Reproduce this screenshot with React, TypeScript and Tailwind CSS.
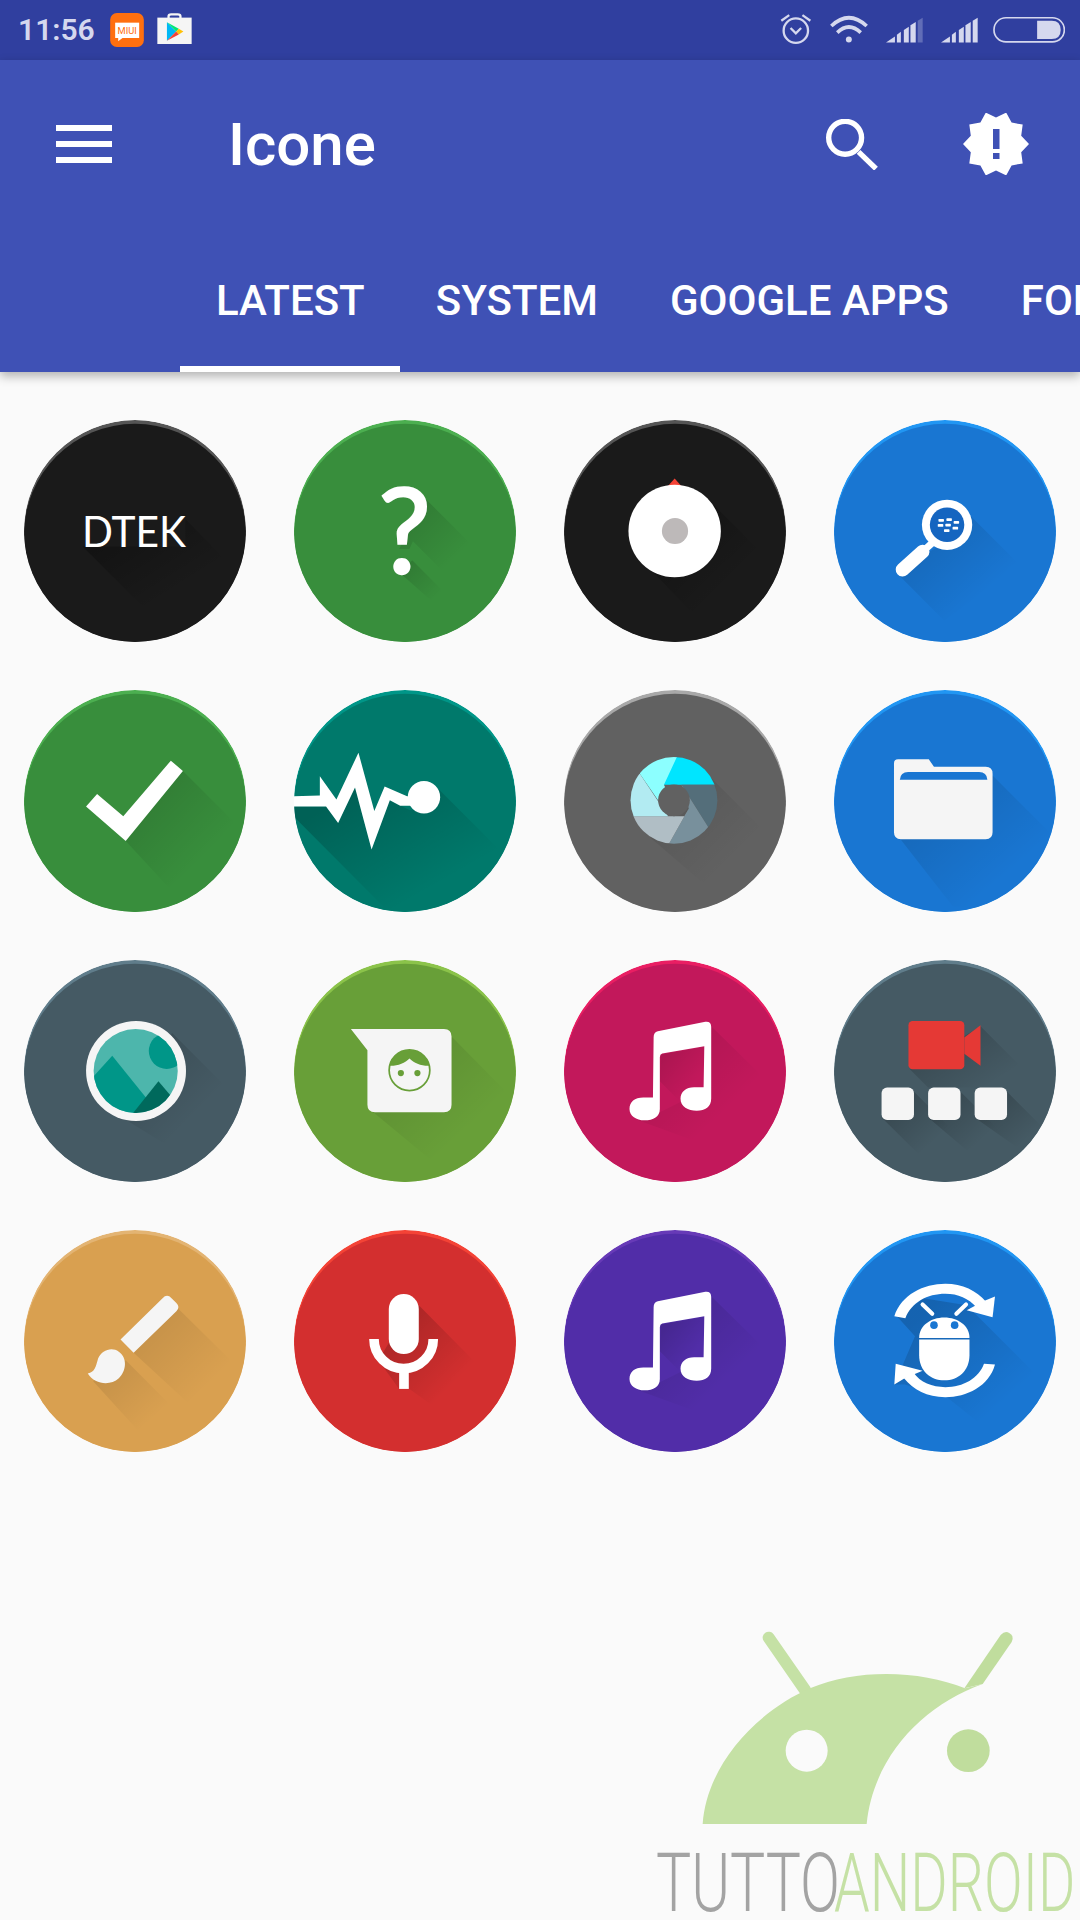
import React from 'react';

const STATUS = '#D5D8EE';

type FrameProps = {
    id: string;
    color: string;
    hi: string;
    x: number;
    y: number;
    shadows: string[];
    depth?: number;
    children: React.ReactNode;
};

// icon coordinates are kept in the zoomed crop's units, hence the viewBox offset
const Frame: React.FC<FrameProps> = ({ id, color, hi, x, y, shadows, depth = 0.13, children }) => {
    const cx = x + 322;
    const cy = y + 322;
    return (
        <svg viewBox={`${x} ${y} 644 644`} className="w-[222px] h-[222px]">
            <defs>
                <clipPath id={`${id}-clip`}>
                    <circle cx={cx} cy={cy} r={322} />
                </clipPath>
                <linearGradient id={`${id}-sh`} x1="0" y1="0" x2="1" y2="1">
                    <stop offset="0.15" stopColor="#000" stopOpacity={depth} />
                    <stop offset="0.72" stopColor="#000" stopOpacity={0} />
                </linearGradient>
            </defs>
            <g clipPath={`url(#${id}-clip)`}>
                <circle cx={cx} cy={cy} r={322} fill={hi} />
                <circle cx={cx} cy={cy + 11} r={322} fill={color} />
                {shadows.map((points, i) => (
                    <polygon key={i} points={points} fill={`url(#${id}-sh)`} />
                ))}
            </g>
            {children}
        </svg>
    );
};

const MusicNote = () => (
    <path
        d="M342 265 L480 237 Q497 235 497 252 L497 460 C497 485 480 495 455 495 C430 495 408 485 408 460 C408 440 425 426 450 427 L475 427 L477 308 L355 329 Q348 331 348 340 L348 490 C348 512 330 523 303 523 C280 523 260 510 260 490 C260 470 275 457 300 457 L328 457 L330 282 Q330 268 342 265 Z"
        fill="#fff"
    />
);

const musicShadows = [
    '350,332 477,310 477,427 425,432 408,470 348,410',
    '497,250 640,390 470,590 285,523 348,500 408,470 497,470',
];

const icons: React.ReactNode[] = [
    <Frame key="dtek" id="dtek" color="#1A1A1A" hi="#555555" x={70} y={58} depth={0.3} shadows={['240,425 538,425 538,345 660,470 560,610 420,605']}>
        <text x={238} y={425} textLength={302} lengthAdjust="spacingAndGlyphs" fontSize={125} fontFamily="Lato" fontWeight={400} fill="#fff">DTEK</text>
    </Frame>,
    <Frame key="help" id="help" color="#388E3C" hi="#4CAF50" x={855} y={58} shadows={['1240,290 1395,445 1310,520 1200,410 1190,432 1160,432', '1198,465 1315,582 1285,610 1160,500']}>
        <text x={1176} y={503} textAnchor="middle" fontSize={342} fontFamily="Lato" fontWeight={400} fill="#fff" stroke="#fff" strokeWidth={7}>?</text>
    </Frame>,
    <Frame key="disc" id="disc" color="#1A1A1A" hi="#555555" x={70} y={58} depth={0.3} shadows={['485,285 650,450 450,625 300,470']}>
        <polygon points="391,228 369,252 413,252" fill="#F44336" />
        <circle cx={391} cy={380} r={134} fill="#fff" />
        <circle cx={392} cy={380} r={38} fill="#BDB9B9" />
    </Frame>,
    <Frame key="bb" id="bb" color="#1976D2" hi="#2196F3" x={855} y={58} shadows={['1250,335 1395,480 1175,640 1045,510 1130,440 1150,430']}>
        <path d="M1145 410 L1115 437" stroke="#fff" strokeWidth={20} />
        <path d="M1112 440 L1054 492" stroke="#fff" strokeWidth={40} strokeLinecap="round" />
        <circle cx={1183} cy={362} r={73} fill="#fff" />
        <circle cx={1183} cy={362} r={50} fill="#1565C0" />
        {[[1158, 345], [1181, 343], [1202, 351], [1156, 360], [1178, 359], [1199, 368], [1174, 375]].map(([rx, ry], i) => (
            <rect key={i} x={rx} y={ry} width={16} height={8} rx={2} fill="#fff" />
        ))}
    </Frame>,
    <Frame key="check" id="check" color="#388E3C" hi="#4CAF50" x={70} y={842} shadows={['531,1077 690,1236 490,1415 365,1280']}>
        <polygon points="496,1047 531,1077 365,1280 250,1180 282,1144 358,1208" fill="#fff" />
    </Frame>,
    <Frame key="pulse" id="pulse" color="#00796B" hi="#009688" x={855} y={842} depth={0.2} shadows={['855,1180 948,1180 983,1228 1032,1125 1080,1305 1133,1162 1190,1190 1260,1190 1275,1130 1490,1345 1400,1460 1130,1486 855,1210']}>
        <polygon points="855,1150 930,1148 930,1092 978,1160 1042,1024 1088,1193 1118,1122 1183,1150 1200,1150 1200,1178 1163,1178 1133,1162 1080,1305 1032,1125 983,1228 948,1180 855,1180" fill="#fff" />
        <circle cx={1232} cy={1153} r={47} fill="#fff" />
    </Frame>,
    <Frame key="aperture" id="aperture" color="#616161" hi="#A8A8A8" x={70} y={842} depth={0.1} shadows={['490,1090 655,1255 500,1425 320,1270']}>
        <defs>
            <clipPath id="aperture-lens">
                <circle cx={389} cy={1162} r={126} />
            </clipPath>
        </defs>
        <g clipPath="url(#aperture-lens)">
            <polygon points="405,1020 530,1020 530,1117 345,1117" fill="#00E5FF" />
            <polygon points="411,1117 560,1117 560,1300 490,1242" fill="#546E7A" />
            <polygon points="411,1117 490,1242 530,1320 375,1320 375,1287 432,1186" fill="#78909C" />
            <polygon points="432,1186 375,1287 240,1320 240,1208 420,1208" fill="#B0BEC5" />
            <polygon points="290,1085 372,1208 240,1208 240,1085" fill="#B2EBF2" />
            <polygon points="405,1020 360,1117 375,1150 345,1165 290,1085 290,1020" fill="#8CFFFF" />
        </g>
        <circle cx={389} cy={1162} r={46} fill="#616161" />
    </Frame>,
    <Frame key="folder" id="folder" color="#1976D2" hi="#2196F3" x={855} y={842} shadows={['1315,1090 1495,1270 1300,1475 1200,1470 1040,1265']}>
        <path d="M1029 1055 Q1029 1043 1041 1043 L1130 1043 L1145 1065 L1295 1065 Q1315 1065 1315 1085 L1315 1255 Q1315 1275 1295 1275 L1049 1275 Q1029 1275 1029 1255 Z" fill="#F5F5F5" />
        <path d="M1046 1102 Q1048 1080 1070 1080 L1276 1080 Q1298 1080 1300 1102 Z" fill="#1976D2" />
    </Frame>,
    <Frame key="gallery" id="gallery" color="#455A64" hi="#607D8B" x={70} y={58} depth={0.16} shadows={['500,270 655,425 500,605 330,500']}>
        <defs>
            <clipPath id="gallery-lens">
                <circle cx={394} cy={380} r={122} />
            </clipPath>
        </defs>
        <circle cx={395} cy={380} r={145} fill="#F5F5F5" />
        <circle cx={394} cy={380} r={122} fill="#4DB6AC" />
        <g clipPath="url(#gallery-lens)">
            <circle cx={484} cy={322} r={52} fill="#009688" />
            <polygon points="326,336 430,465 390,510 250,510 250,420" fill="#009688" />
            <polygon points="460,410 520,480 470,520 380,510" fill="#00695C" />
        </g>
    </Frame>,
    <Frame key="face" id="face" color="#689F38" hi="#8BC34A" x={855} y={58} depth={0.11} shadows={['1312,280 1475,445 1260,645 1085,500']}>
        <path d="M1020 258 L1290 258 Q1312 258 1312 280 L1312 478 Q1312 500 1290 500 L1090 500 Q1068 500 1068 478 L1068 320 Z" fill="#F5F5F5" />
        <circle cx={1190} cy={378} r={59} fill="#F5F5F5" stroke="#689F38" strokeWidth={5} />
        <path d="M1132 365 C1138 335 1162 319 1190 319 C1218 319 1242 335 1248 365 C1225 366 1203 358 1190 344 C1177 358 1155 366 1132 365 Z" fill="#689F38" />
        <circle cx={1165} cy={386} r={9} fill="#689F38" />
        <circle cx={1213} cy={386} r={9} fill="#689F38" />
    </Frame>,
    <Frame key="pink" id="pink" color="#C2185B" hi="#E91E63" x={70} y={58} depth={0.11} shadows={musicShadows}>
        <MusicNote />
    </Frame>,
    <Frame key="cam" id="cam" color="#455A64" hi="#607D8B" x={855} y={58} depth={0.2} shadows={['1280,250 1425,395 1357,470 1263,428 1222,428 1128,428 1075,375', '1087,440 1205,558 1120,640 993,515', '1222,440 1345,563 1270,635 1128,515', '1357,440 1485,568 1420,625 1263,515']}>
        <rect x={1071} y={235} width={162} height={140} rx={12} fill="#E53935" />
        <polygon points="1233,283 1280,247 1280,365 1233,330" fill="#E53935" />
        <rect x={993} y={428} width={94} height={94} rx={16} fill="#F5F5F5" />
        <rect x={1128} y={428} width={94} height={94} rx={16} fill="#F5F5F5" />
        <rect x={1263} y={428} width={94} height={94} rx={16} fill="#F5F5F5" />
    </Frame>,
    <Frame key="brush" id="brush" color="#D9A050" hi="#E3B473" x={70} y={842} depth={0.09} shadows={['517,1070 695,1245 580,1375 388,1198', '365,1220 525,1380 420,1445 270,1280']}>
        <path d="M350 1160 L472 1040 Q485 1026 498 1040 L512 1054 Q524 1066 512 1078 L388 1198 Z" fill="#F5F5F5" />
        <path d="M255 1258 C275 1255 278 1240 285 1215 C295 1190 325 1180 345 1195 C370 1212 368 1250 345 1272 C320 1295 275 1290 255 1258 Z" fill="#F5F5F5" />
    </Frame>,
    <Frame key="mic" id="mic" color="#D32F2F" hi="#F44336" x={855} y={842} depth={0.2} shadows={['1217,1060 1405,1250 1290,1375 1190,1303 1160,1303 1100,1220 1130,1170']}>
        <path d="M1087 1158 A86 86 0 0 0 1259 1158" fill="none" stroke="#fff" strokeWidth={28} />
        <rect x={1160} y={1240} width={28} height={63} fill="#fff" />
        <rect x={1130} y={1028} width={87} height={174} rx={43.5} fill="#fff" />
    </Frame>,
    <Frame key="purple" id="purple" color="#512DA8" hi="#673AB7" x={70} y={58} depth={0.14} shadows={musicShadows}>
        <MusicNote />
    </Frame>,
    <Frame key="sync" id="sync" color="#1976D2" hi="#2196F3" x={855} y={842} depth={0.16} shadows={['1240,1060 1485,1305 1330,1445 1180,1325 1060,1290 1030,1290 1090,1150 1040,1095 1115,1040']}>
        <path d="M1030 1092 C1050 1030 1115 998 1178 998 C1228 998 1268 1018 1296 1050 L1270 1068 C1245 1040 1215 1027 1178 1027 C1125 1027 1080 1052 1062 1098 Z" fill="#fff" />
        <polygon points="1322,1035 1315,1095 1240,1075 1290,1048" fill="#fff" />
        <path d="M1322 1232 C1305 1295 1240 1327 1178 1327 C1125 1327 1085 1305 1058 1272 L1085 1255 C1105 1285 1140 1298 1178 1298 C1230 1298 1275 1272 1290 1230 Z" fill="#fff" />
        <polygon points="1034,1230 1030,1290 1060,1272 1112,1250" fill="#fff" />
        <path d="M1112 1058 L1140 1085 M1238 1058 L1210 1085" stroke="#fff" strokeWidth={12} strokeLinecap="round" />
        <path d="M1102 1155 C1102 1120 1135 1096 1175 1096 C1215 1096 1248 1120 1248 1155 Z" fill="#fff" />
        <path d="M1102 1160 L1248 1160 L1248 1205 C1248 1250 1215 1278 1175 1278 C1135 1278 1102 1250 1102 1205 Z" fill="#fff" />
        <circle cx={1145} cy={1118} r={11} fill="#1976D2" />
        <circle cx={1205} cy={1118} r={11} fill="#1976D2" />
    </Frame>,
];

const SignalBars: React.FC<{ x: number; full?: boolean }> = ({ x, full }) => (
    <svg viewBox={`${x} 0 112 180`} className="h-[60px] w-[37px]" fill={STATUS}>
        <polygon points={`${x},128 ${x + 27},110 ${x + 27},128`} />
        <polygon points={`${x + 33},128 ${x + 33},104 ${x + 45},95 ${x + 45},128`} />
        <polygon points={`${x + 54},128 ${x + 54},90 ${x + 69},80 ${x + 69},128`} />
        <polygon points={`${x + 74},128 ${x + 74},76 ${x + 90},66 ${x + 90},128`} />
        <polygon points={`${x + 96},128 ${x + 96},62 ${x + 111},53 ${x + 111},128`} opacity={full ? 1 : 0.3} />
    </svg>
);

const StatusBar = () => (
    <div className="flex items-center h-[60px] bg-[#303F9F] pl-[18px] pr-[15px]">
        <span className="text-[30px] font-semibold text-[#D5D8EE] leading-none">11:56</span>
        <svg viewBox="330 39 101 102" className="ml-[15px] w-[34px] h-[34px]">
            <rect x={330} y={39} width={101} height={102} rx={20} fill="#FF6F0F" />
            <rect x={345} y={68} width={72} height={46} fill="#fff" />
            <polygon points="354,112 354,124 370,112" fill="#fff" />
            <text x={381} y={101} textAnchor="middle" fontSize={28} fontFamily="Roboto" fill="#FF6F0F">MIUI</text>
        </svg>
        <svg viewBox="473 38 104 94" className="ml-[13px] w-[35px] h-[31px] -mt-[3px]">
            <path d="M507 54 V48 Q507 42 515 42 H535 Q543 42 543 48 V54" fill="none" stroke="#F5F5F5" strokeWidth={7} />
            <rect x={473} y={52} width={104} height={80} fill="#F5F5F5" />
            <polygon points="502,66 502,122 530,94" fill="#00B8F5" />
            <polygon points="502,66 538,86 530,94" fill="#00E676" />
            <polygon points="538,86 552,94 538,103 530,94" fill="#FFC107" />
            <polygon points="502,122 530,94 538,103" fill="#F44336" />
        </svg>
        <svg viewBox="30 0 97 180" className="ml-auto h-[60px] w-[32px]" fill="none" stroke={STATUS} strokeWidth={7}>
            <circle cx={78} cy={92} r={37} />
            <path d="M62 84 L78 100 L94 84" />
            <path d="M34 62 L58 45 M122 62 L98 45" />
        </svg>
        <svg viewBox="180 0 115 180" className="ml-[18px] h-[60px] w-[38px]" fill="none" stroke={STATUS} strokeWidth={11}>
            <path d="M184 78 Q237 28 291 78" />
            <path d="M202 98 Q237 64 273 98" />
            <circle cx={237} cy={119} r={9} fill={STATUS} stroke="none" />
        </svg>
        <div className="ml-[18px]"><SignalBars x={348} /></div>
        <div className="ml-[18px]"><SignalBars x={513} full /></div>
        <svg viewBox="668 0 217 180" className="ml-[15px] h-[60px] w-[72px]">
            <rect x={671} y={53} width={212} height={73} rx={36} fill="none" stroke={STATUS} strokeWidth={5} />
            <path d="M801 62 L845 62 Q872 62 872 90 Q872 117 845 117 L801 117 Z" fill={STATUS} />
        </svg>
    </div>
);

// ten pointed badge around the exclamation mark
const starPoints = Array.from({ length: 20 }, (_, i) => {
    const r = i % 2 === 0 ? 33 : 26.5;
    const a = (i * Math.PI) / 10;
    return `${(33 + r * Math.cos(a)).toFixed(1)},${(31 + r * Math.sin(a)).toFixed(1)}`;
}).join(' ');

const tabs = ['LATEST', 'SYSTEM', 'GOOGLE APPS', 'FONTS'];

const Watermark = () => (
    <svg viewBox="0 0 1350 960" className="absolute right-0 bottom-0 w-[450px] h-[320px]">
        <path d="M416 113 L525 270" stroke="#C5E1A5" strokeWidth={36} strokeLinecap="round" />
        <path d="M1003 265 L1112 105 Q1130 85 1147 108 Q1150 118 1145 126 L1058 252 Z" fill="#C0DD9D" />
        <path d="M218 672 C230 500 370 340 540 265 C680 205 870 210 1005 265 L1058 252 C880 315 730 470 710 672 Z" fill="#C5E1A5" />
        <circle cx={530} cy={452} r={63} fill="#FAFAFA" />
        <circle cx={1015} cy={452} r={64} fill="#C0DD9D" />
        <text x={78} y={932} textLength={552} lengthAdjust="spacingAndGlyphs" fontSize={242} fontFamily="Roboto" fontWeight={300} fill="#A3A3A3">TUTTO</text>
        <text x={612} y={932} textLength={724} lengthAdjust="spacingAndGlyphs" fontSize={242} fontFamily="Roboto" fontWeight={300} fill="#C5E1A5">ANDROID</text>
    </svg>
);

const App: React.FC = () => {
    return (
        <div className="relative w-[1080px] h-[1920px] overflow-hidden bg-[#FAFAFA] font-[family-name:Roboto,sans-serif]">
            <StatusBar />

            {/* App bar */}
            <header className="relative z-10 bg-[#3F51B5] shadow-[0_4px_10px_rgba(0,0,0,0.3)]">
                <div className="flex items-center h-[168px] pl-[56px] pr-[51px]">
                    <div className="flex flex-col gap-[10px] w-[56px]">
                        <div className="h-[6px] bg-white" />
                        <div className="h-[6px] bg-white" />
                        <div className="h-[6px] bg-white" />
                    </div>
                    <h1 className="ml-[116px] mt-[2px] text-[60px] font-medium text-white leading-none">Icone</h1>
                    <svg viewBox="78 55 155 152" className="ml-auto w-[52px] h-[51px]" fill="none" stroke="#fff">
                        <circle cx={135} cy={111} r={49} strokeWidth={16} />
                        <path d="M175 153 L227 203" strokeWidth={16} />
                    </svg>
                    <svg viewBox="0 0 66 62" className="ml-[85px] w-[66px] h-[62px]">
                        <polygon points={starPoints} fill="#fff" />
                        <rect x={30} y={16} width={6.5} height={20} fill="#3F51B5" />
                        <rect x={30} y={40} width={6.5} height={6} fill="#3F51B5" />
                    </svg>
                </div>
                <nav className="flex h-[144px] pl-[180px] overflow-hidden">
                    {tabs.map((tab, i) => (
                        <div key={tab} className={`relative flex items-center text-[42px] font-medium text-white whitespace-nowrap ${i === 0 ? 'pl-[36px] pr-[35px]' : 'px-[36px]'}`}>
                            {tab}
                            {i === 0 && <div className="absolute left-0 right-0 bottom-0 h-[6px] bg-white" />}
                        </div>
                    ))}
                </nav>
            </header>

            {/* Icon grid */}
            <main className="grid grid-cols-4 pt-[24px]">
                {icons.map((icon, i) => (
                    <div key={i} className="flex items-center justify-center h-[270px]">
                        {icon}
                    </div>
                ))}
            </main>

            <Watermark />
        </div>
    );
};

export default App;
